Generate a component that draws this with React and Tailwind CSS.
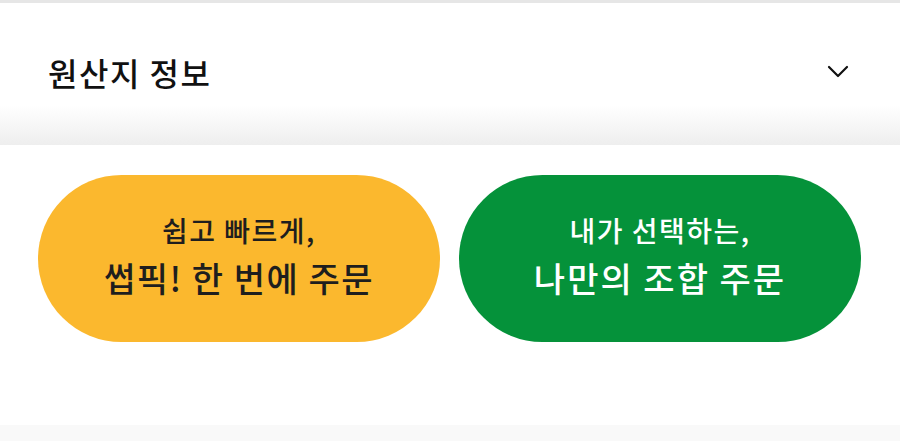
export default function App() {
  const font = { fontFamily: '"Noto Sans CJK KR", "Noto Sans", sans-serif' };
  return (
    <div className="w-[900px] h-[441px] bg-white flex flex-col overflow-hidden" style={font}>
      <div className="h-[3px] bg-[#e6e6e6]" />
      <div className="h-[142px] flex items-center justify-between pl-[48px] pr-[51px] pb-[4px] bg-linear-to-b from-white from-72% to-[#eeeeee]">
        <h2 className="text-[32px] font-medium text-[#111] leading-none tracking-[1.5px]">원산지 정보</h2>
        <svg width="22" height="14" viewBox="0 0 22 14" fill="none">
          <polyline points="2,2 11,11 20,2" stroke="#111" strokeWidth="2.2" strokeLinecap="round" strokeLinejoin="round" />
        </svg>
      </div>
      <div className="flex gap-[19px] pl-[38px] pr-[39px] pt-[30px]">
        <button className="w-[402px] h-[167px] rounded-full bg-[#fbb82e] flex flex-col items-center justify-center pb-[6px] text-[#1e1e1e]">
          <span className="text-[28px] font-medium leading-none tracking-[1.5px]">쉽고 빠르게,</span>
          <span className="text-[34px] font-medium leading-none tracking-[1.5px] mt-[17px]">썹픽! 한 번에 주문</span>
        </button>
        <button className="w-[402px] h-[167px] rounded-full bg-[#05923a] flex flex-col items-center justify-center pb-[6px] text-white">
          <span className="text-[28px] font-medium leading-none tracking-[1.5px]">내가 선택하는,</span>
          <span className="text-[34px] font-medium leading-none tracking-[2px] mt-[17px]">나만의 조합 주문</span>
        </button>
      </div>
      <div className="flex-1" />
      <div className="h-[16px] bg-[#f9f9f9]" />
    </div>
  );
}
